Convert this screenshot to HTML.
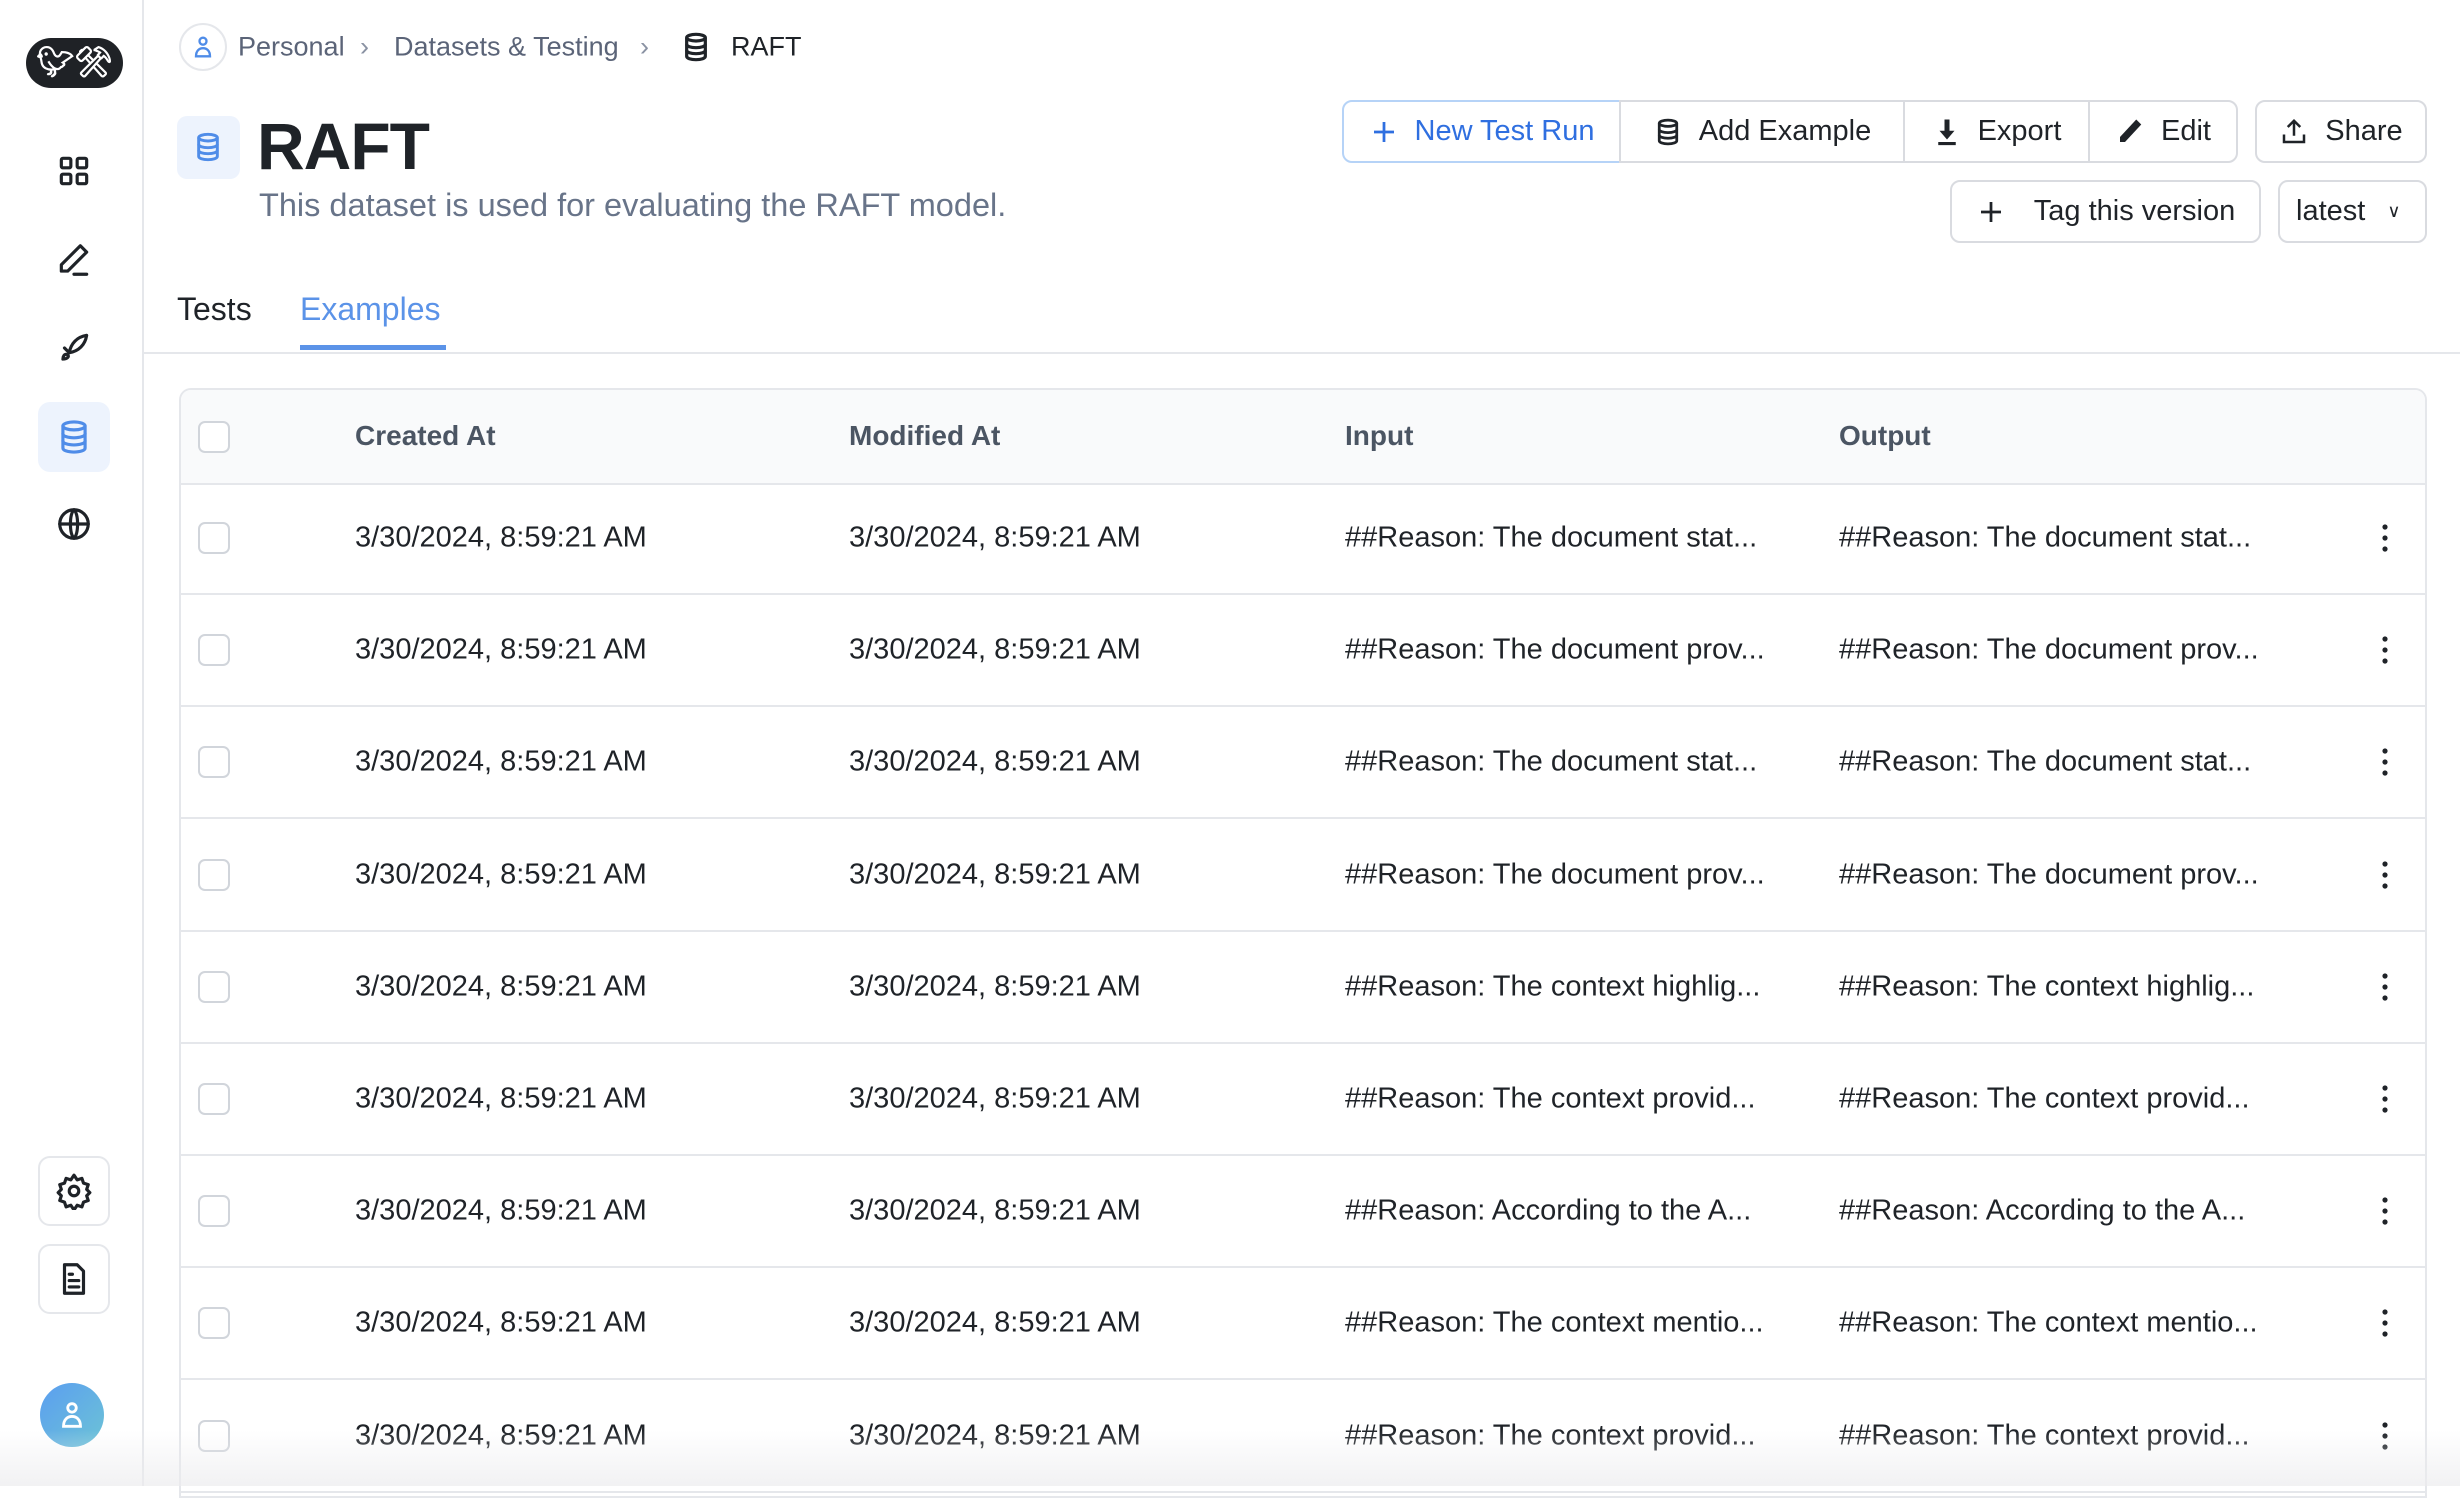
<!DOCTYPE html>
<html><head><meta charset="utf-8"><style>
*{box-sizing:border-box;margin:0;padding:0}
body{width:2460px;height:1486px;overflow:hidden;background:#fff;font-family:"Liberation Sans",sans-serif;color:#1f2328;position:relative}
.abs{position:absolute}
.side{left:0;top:0;width:144px;height:1486px;border-right:2px solid #e5e7eb;background:#fff}
.ic{position:absolute;left:38px;width:72px;height:70px;display:flex;align-items:center;justify-content:center;border-radius:12px}
.ic svg{width:38px;height:38px;fill:none;stroke:#1f2328;stroke-width:2;stroke-linecap:round;stroke-linejoin:round}
.bc{top:47px;font-size:27px;color:#5b6478;transform:translateY(-50%)}
.btn{position:absolute;height:63px;border:2px solid #d9dbe0;display:flex;align-items:center;justify-content:center;font-size:29px;color:#1f2328;background:#fff;gap:16px}
.btn svg{width:30px;height:30px}
.row{position:absolute;left:179px;width:2248px;height:112px;border-bottom:2px solid #e5e7eb;font-size:29px;color:#1f2328}
.row span{position:absolute;top:50%;transform:translateY(-50%);white-space:nowrap}
.cb{position:absolute;left:19px;top:50%;margin-top:-16px;width:32px;height:32px;border:2px solid #d1d5db;border-radius:7px;background:#fff}
.keb{position:absolute;left:2203px;top:50%;margin-top:-14px;width:6px;height:28px}
</style></head><body>
<div class="abs side">
  <div class="abs" style="left:26px;top:38px;width:97px;height:50px;background:#1f2226;border-radius:25px;color:#fff;font-size:30px;font-weight:bold;text-align:center;line-height:50px">🐦︎⚒︎</div>
  <div class="ic" style="top:136px"><svg viewBox="0 0 24 24"><rect x="4" y="4" width="6" height="6" rx="1"/><rect x="14" y="4" width="6" height="6" rx="1"/><rect x="4" y="14" width="6" height="6" rx="1"/><rect x="14" y="14" width="6" height="6" rx="1"/></svg></div>
  <div class="ic" style="top:225px"><svg viewBox="0 0 24 24"><path d="M16 3l4 4L8 19H4v-4z"/><path d="M12 21h8"/></svg></div>
  <div class="ic" style="top:313px"><svg viewBox="0 0 24 24"><path d="M9 15c1-6 5-10 11-11-1 6-5 10-11 11z"/><path d="M9 15l-3-3"/><path d="M5 19c0-2 1-3 2-3s2 1 1 2-3 1-3 1z"/></svg></div>
  <div class="ic" style="top:402px;background:#edf3fd"><svg viewBox="0 0 24 24" style="stroke:#4f8ce8"><ellipse cx="12" cy="5" rx="7" ry="2.5"/><path d="M5 5v14c0 1.4 3 2.5 7 2.5s7-1.1 7-2.5V5"/><path d="M5 10c0 1.4 3 2.5 7 2.5s7-1.1 7-2.5M5 14.5c0 1.4 3 2.5 7 2.5s7-1.1 7-2.5"/></svg></div>
  <div class="ic" style="top:489px"><svg viewBox="0 0 24 24"><circle cx="12" cy="12" r="9"/><path d="M3 12h18M12 3c3 3 3 15 0 18M12 3c-3 3-3 15 0 18"/></svg></div>
  <div class="ic" style="top:1156px;border:2px solid #e5e7eb"><svg viewBox="0 0 24 24"><circle cx="12" cy="12" r="3"/><path d="M12 2l2 3 3-1 1 3 3 1-1 3 2 2-2 2 1 3-3 1-1 3-3-1-2 3-2-3-3 1-1-3-3-1 1-3-2-2 2-2-1-3 3-1 1-3 3 1z"/></svg></div>
  <div class="ic" style="top:1244px;border:2px solid #e5e7eb"><svg viewBox="0 0 24 24"><path d="M6 3h8l4 4v14H6z"/><path d="M9 9h2M9 13h6M9 17h6"/></svg></div>
  <div class="abs" style="left:40px;top:1383px;width:64px;height:64px;border-radius:50%;background:linear-gradient(135deg,#5b9ef0,#6cc3d6)"><svg viewBox="0 0 24 24" style="width:34px;height:34px;margin:15px;fill:none;stroke:#fff;stroke-width:2"><circle cx="12" cy="7" r="3"/><path d="M6 20c0-5 3-7 6-7s6 2 6 7z"/></svg></div>
</div>
<div class="abs" style="left:179px;top:23px;width:48px;height:48px;border-radius:50%;border:2px solid #e5e7eb"><svg viewBox="0 0 24 24" style="width:28px;height:28px;margin:8px;fill:none;stroke:#4f8ce8;stroke-width:2"><circle cx="12" cy="7" r="3"/><path d="M6 20c0-5 3-7 6-7s6 2 6 7z"/></svg></div>
<div class="abs bc" style="left:238px">Personal</div>
<div class="abs bc" style="left:360px;color:#8a92a3">›</div>
<div class="abs bc" style="left:394px">Datasets &amp; Testing</div>
<div class="abs bc" style="left:640px;color:#8a92a3">›</div>
<svg class="abs" style="left:680px;top:31px;width:32px;height:32px;fill:none;stroke:#1f2328;stroke-width:2.4" viewBox="0 0 24 24"><ellipse cx="12" cy="5" rx="7" ry="2.5"/><path d="M5 5v14c0 1.4 3 2.5 7 2.5s7-1.1 7-2.5V5"/><path d="M5 10c0 1.4 3 2.5 7 2.5s7-1.1 7-2.5M5 14.5c0 1.4 3 2.5 7 2.5s7-1.1 7-2.5"/></svg>
<div class="abs bc" style="left:731px;color:#1f2328">RAFT</div>
<div class="abs" style="left:177px;top:116px;width:63px;height:63px;background:#edf3fd;border-radius:10px"><svg viewBox="0 0 24 24" style="width:32px;height:32px;margin:15px;fill:none;stroke:#4f8ce8;stroke-width:2.2"><ellipse cx="12" cy="5" rx="7" ry="2.5"/><path d="M5 5v14c0 1.4 3 2.5 7 2.5s7-1.1 7-2.5V5"/><path d="M5 10c0 1.4 3 2.5 7 2.5s7-1.1 7-2.5M5 14.5c0 1.4 3 2.5 7 2.5s7-1.1 7-2.5"/></svg></div>
<div class="abs" style="left:257px;top:106px;font-size:66px;font-weight:bold;letter-spacing:-1px;color:#1f2328;line-height:80px">RAFT</div>
<div class="abs" style="left:259px;top:187px;font-size:32.5px;color:#687489">This dataset is used for evaluating the RAFT model.</div>
<div class="abs" style="left:177px;top:291px;font-size:32px;color:#1f2328">Tests</div>
<div class="abs" style="left:300px;top:291px;font-size:32px;color:#5b93e8">Examples</div>
<div class="abs" style="left:144px;top:352px;width:2316px;height:2px;background:#e5e7eb"></div>
<div class="abs" style="left:300px;top:345px;width:146px;height:5px;background:#5b93e8"></div>

<div class="btn" style="left:1342px;top:100px;width:279px;border-color:#b6d3f7;border-radius:10px 0 0 10px;color:#2f6fe0"><svg viewBox="0 0 24 24" style="fill:none;stroke:#2f6fe0;stroke-width:2.2"><path d="M12 4v16M4 12h16"/></svg>New Test Run</div>
<div class="btn" style="left:1619px;top:100px;width:286px;border-left:2px solid #d9dbe0"><svg viewBox="0 0 24 24" style="fill:none;stroke:#1f2328;stroke-width:2.2"><ellipse cx="12" cy="5" rx="7" ry="2.5"/><path d="M5 5v14c0 1.4 3 2.5 7 2.5s7-1.1 7-2.5V5"/><path d="M5 10c0 1.4 3 2.5 7 2.5s7-1.1 7-2.5M5 14.5c0 1.4 3 2.5 7 2.5s7-1.1 7-2.5"/></svg>Add Example</div>
<div class="btn" style="left:1903px;top:100px;width:187px"><svg viewBox="0 0 24 24" style="fill:#1f2328"><path d="M10 2h4v9h4l-6 7-6-7h4z"/><rect x="5" y="20" width="14" height="2.5"/></svg>Export</div>
<div class="btn" style="left:2088px;top:100px;width:150px;border-radius:0 10px 10px 0"><svg viewBox="0 0 24 24" style="fill:#1f2328"><path d="M17 2l4 4L8 20H4v-4z"/></svg>Edit</div>
<div class="btn" style="left:2255px;top:100px;width:172px;border-radius:10px"><svg viewBox="0 0 24 24" style="fill:none;stroke:#1f2328;stroke-width:2"><path d="M12 15V3M7 8l5-5 5 5M4 14v6h16v-6"/></svg>Share</div>
<div class="btn" style="left:1950px;top:180px;width:311px;border-radius:10px;gap:28px"><svg viewBox="0 0 24 24" style="fill:none;stroke:#1f2328;stroke-width:2.2"><path d="M12 4v16M4 12h16"/></svg>Tag this version</div>
<div class="btn" style="left:2278px;top:180px;width:149px;border-radius:10px;justify-content:flex-start;padding-left:16px;gap:22px">latest<span style="font-size:18px">∨</span></div>

<div class="abs" style="left:179px;top:388px;width:2248px;height:1110px;border:2px solid #e5e7eb;border-radius:12px 12px 0 0;overflow:hidden">
<div class="abs" style="left:0;top:0;width:2248px;height:95px;background:#f9fafb;border-bottom:2px solid #e5e7eb;font-size:28px;color:#4b5563;font-weight:bold">
<div class="cb" style="left:17px"></div>
<span class="abs" style="left:174px;top:30px">Created At</span>
<span class="abs" style="left:668px;top:30px">Modified At</span>
<span class="abs" style="left:1164px;top:30px">Input</span>
<span class="abs" style="left:1658px;top:30px">Output</span>
</div>
</div>
<div id="rows"></div>
<script>
var t=["The document stat...","The document prov...","The document stat...","The document prov...","The context highlig...","The context provid...","According to the A...","The context mentio...","The context provid..."];
var h="";
for(var i=0;i<9;i++){var y=483+i*112.2;
h+='<div class="row" style="top:'+y+'px"><div class="cb" style="left:19px"></div><span style="left:176px">3/30/2024, 8:59:21 AM</span><span style="left:670px">3/30/2024, 8:59:21 AM</span><span style="left:1166px">##Reason: '+t[i]+'</span><span style="left:1660px">##Reason: '+t[i]+'</span><svg class="keb" viewBox="0 0 6 28"><circle cx="3" cy="3" r="2.6" fill="#1f2328"/><circle cx="3" cy="14" r="2.6" fill="#1f2328"/><circle cx="3" cy="25" r="2.6" fill="#1f2328"/></svg></div>';}
document.getElementById("rows").innerHTML=h;
</script>
<div class="abs" style="left:0;top:1430px;width:2460px;height:56px;background:linear-gradient(rgba(240,240,242,0),rgba(236,236,238,0.7))"></div>
</body></html>
